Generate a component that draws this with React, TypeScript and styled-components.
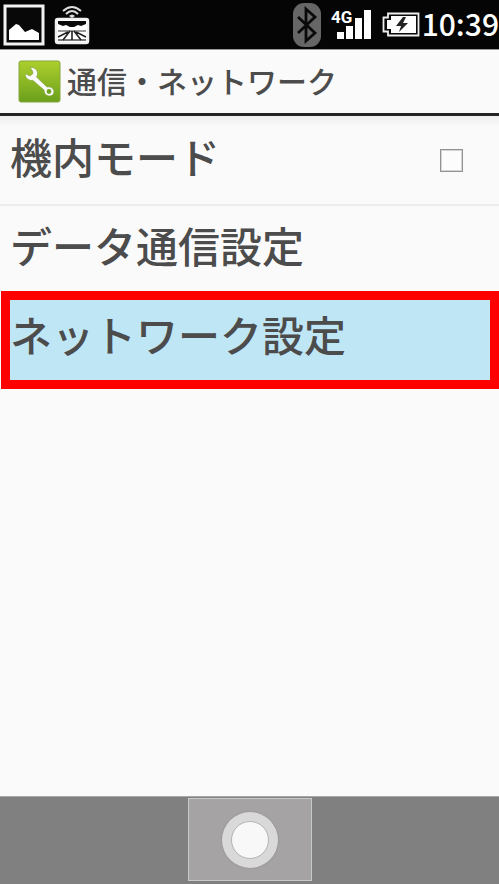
import React from "react";
import styled, { createGlobalStyle } from "styled-components";

const GlobalStyle = createGlobalStyle`
  *, *::before, *::after { box-sizing: border-box; }
  body {
    margin: 0;
    background: #fafafa;
    color: #4c4c4c;
    font-family: "Noto Sans CJK JP", sans-serif;
  }
`;

const Screen = styled.div`
  display: flex;
  flex-direction: column;
  min-height: 100vh;
`;

const StatusBar = styled.div`
  display: flex;
  align-items: center;
  justify-content: space-between;
  height: 49px;
  padding-left: 3px;
  background: #050505;
  color: #fff;
`;

const StatusGroup = styled.div<{ $gap: number }>`
  display: flex;
  align-items: center;
  gap: ${(p) => p.$gap}px;

  svg { display: block; flex: none; }
`;

const Clock = styled.time`
  margin-left: -8px;
  padding-bottom: 4px;
  font: 500 30px/44px "Noto Sans CJK JP", sans-serif;
`;

const Header = styled.header`
  display: flex;
  align-items: center;
  gap: 6px;
  height: 67px;
  padding: 0 18px;
  border-top: 1px solid #999;
  border-bottom: 3px solid #252325;
`;

const Title = styled.h1`
  margin: 0;
  padding-bottom: 4px;
  font-size: 30px;
  font-weight: 500;
  line-height: 56px;
  white-space: nowrap;
`;

const List = styled.ul`
  flex: 1;
  margin: 0;
  padding: 0;
  list-style: none;
  background: linear-gradient(#eeeeee, #fafafa 10px);
`;

const Item = styled.li<{ $divided?: boolean }>`
  border-bottom: ${(p) => (p.$divided ? "2px solid #ececec" : "0")};
`;

const rowText = `
  font-family: inherit;
  font-size: 42px;
  font-weight: 500;
  line-height: 60px;
  color: #4c4c4c;
  text-align: left;
  white-space: nowrap;
`;

const ToggleRow = styled.label`
  ${rowText}
  display: flex;
  align-items: center;
  justify-content: space-between;
  height: 88px;
  padding: 0 36px 8px 10px;
`;

const LinkRow = styled.button`
  ${rowText}
  display: block;
  width: 100%;
  height: 85px;
  padding: 0 10px 8px;
  border: 0;
  background: transparent;
`;

const SelectedRow = styled(LinkRow)`
  width: calc(100% - 1px);
  height: 98px;
  margin-left: 1px;
  padding: 0 0 12px;
  border: 9px solid #ff0000;
  background: #bfe6f5;
`;

const Checkbox = styled.input`
  appearance: none;
  width: 23px;
  height: 23px;
  margin: 8px 0 0;
  border: 1px solid #929292;
  outline: 1px solid #d4d4d4;
  outline-offset: -2px;
  background: #fcfcfc;

  &:checked { background: #7fb51d; }
`;

const NavBar = styled.nav`
  display: flex;
  justify-content: center;
  height: 88px;
  padding: 1px 0;
  border-top: 1px solid #a4a8a7;
  background: #808080;
`;

const HomeButton = styled.button`
  display: flex;
  align-items: center;
  justify-content: center;
  width: 124px;
  height: 83px;
  padding: 0;
  border: 1px solid #c6cac9;
  background: #a5a3a4;
`;

const HomeRing = styled.span`
  display: flex;
  align-items: center;
  justify-content: center;
  width: 56px;
  height: 56px;
  border-radius: 50%;
  background: #d9d9d9;
  box-shadow: 0 0 2px #888;
`;

const HomeDot = styled.span`
  width: 38px;
  height: 38px;
  border: 1px solid #b4b4b4;
  border-radius: 50%;
  background: #f8f8f8;
`;

const PictureIcon = () => (
  <svg width="42" height="42" viewBox="0 0 42 42" aria-label="画像">
    <rect x="2" y="2" width="38" height="38" fill="#080808" stroke="#f2f2f2" strokeWidth="3" />
    <path d="M6 36V26l7-6 3 1 6 7 7-3 7 4v7z" fill="#fff" />
  </svg>
);

const BroadcastIcon = () => (
  <svg width="36" height="40" viewBox="0 0 36 40" aria-label="放送">
    <g fill="none" stroke="#ddd" strokeWidth="2">
      <path d="M9 6Q18-2 27 6M12 9Q18 3 24 9" />
    </g>
    <path d="M15 11q3-3 6 0l-3 2z" fill="#ddd" />
    <rect x="2" y="14" width="32" height="24" rx="2" fill="#fff" stroke="#f0f0f0" strokeWidth="2.500" />
    <path d="M4 16h28v3l-5 2-3-1-4 2h-4l-4-2-3 1-5-2z" fill="#0a0a0a" />
    <path d="M4 26h28" stroke="#333" strokeWidth="1" />
    <path d="M16 26L9 35M18 26v9M20 26l7 9M14 27L4 32M22 27l10 5" stroke="#222" strokeWidth="1.600" />
    <path d="M4 35h28" stroke="#222" strokeWidth="1.200" />
  </svg>
);

const BluetoothIcon = () => (
  <svg width="28" height="44" viewBox="0 0 28 44" aria-label="Bluetooth">
    <rect width="28" height="44" rx="11" fill="#666" />
    <path d="M5 14l17 16-9 8V6l9 8L5 30" fill="none" stroke="#0a0a0a" strokeWidth="2.800" />
  </svg>
);

const SignalIcon = () => (
  <svg width="41" height="44" viewBox="0 0 41 44" aria-label="4G">
    <text x="0" y="20" fill="#fff" fontFamily="Roboto, sans-serif" fontSize="17" fontWeight="700">4G</text>
    <path d="M6 29h7v7H6zM15 23h7v13h-7zM24 15h7v21h-7zM33 7h7v29h-7z" fill="#fff" />
  </svg>
);

const BatteryIcon = () => (
  <svg width="38" height="26" viewBox="0 0 38 26" aria-label="充電中">
    <path d="M6 1.500h30.500v22H6v-4H1.500v-14H6z" fill="#080808" stroke="#eee" strokeWidth="1.800" />
    <path d="M9 4h25v17H9v-4H5V8h4z" fill="#fff" />
    <path d="M21 5l-7 9h5l-2 6 9-9h-5l3-6z" fill="#222" />
  </svg>
);

const SettingsIcon = () => (
  <svg width="43" height="43" viewBox="0 0 43 43" aria-hidden="true">
    <defs>
      <linearGradient id="leaf" x1="0" y1="0" x2="0" y2="1">
        <stop offset="0" stopColor="#adcf2c" />
        <stop offset="1" stopColor="#6ba01c" />
      </linearGradient>
    </defs>
    <rect x="1" y="1" width="41" height="41" rx="2" fill="url(#leaf)" stroke="#84a63d" />
    <path
      d="M12 7.500Q18 7 19.500 12Q20 15 18.500 17L29 27Q34 26 36 31Q36 36 31 36Q26 35 26 30L15 20.500Q9 21 7 15L8 14L12 16L15 13.500L14.500 11Z"
      fill="#fafafa"
      stroke="#789c35"
      strokeWidth="0.600"
    />
    <circle cx="31" cy="31.500" r="2.400" fill="#71a51d" />
  </svg>
);

export default function App() {
  return (
    <Screen>
      <GlobalStyle />
      <StatusBar>
        <StatusGroup $gap={9}>
          <PictureIcon />
          <BroadcastIcon />
        </StatusGroup>
        <StatusGroup $gap={10}>
          <BluetoothIcon />
          <SignalIcon />
          <BatteryIcon />
          <Clock>10:39</Clock>
        </StatusGroup>
      </StatusBar>
      <Header>
        <SettingsIcon />
        <Title>通信・ネットワーク</Title>
      </Header>
      <List>
        <Item $divided>
          <ToggleRow>
            機内モード
            <Checkbox type="checkbox" />
          </ToggleRow>
        </Item>
        <Item>
          <LinkRow type="button">データ通信設定</LinkRow>
        </Item>
        <Item>
          <SelectedRow type="button">ネットワーク設定</SelectedRow>
        </Item>
      </List>
      <NavBar>
        <HomeButton type="button" aria-label="ホーム">
          <HomeRing>
            <HomeDot />
          </HomeRing>
        </HomeButton>
      </NavBar>
    </Screen>
  );
}
